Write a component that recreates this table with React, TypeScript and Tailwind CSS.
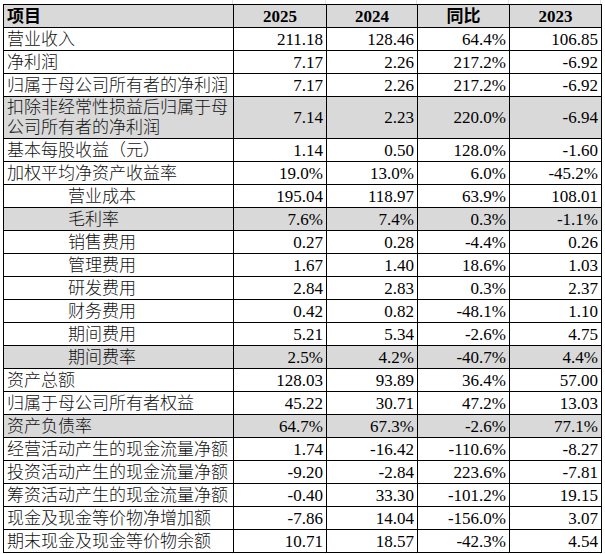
type Row = {
  name: string;
  vals: [string, string, string, string];
  shade?: boolean;
  indent?: boolean;
  tall?: boolean;
};

const rows: Row[] = [
  { name: "营业收入", vals: ["211.18", "128.46", "64.4%", "106.85"] },
  { name: "净利润", vals: ["7.17", "2.26", "217.2%", "-6.92"] },
  { name: "归属于母公司所有者的净利润", vals: ["7.17", "2.26", "217.2%", "-6.92"] },
  { name: "扣除非经常性损益后归属于母公司所有者的净利润", vals: ["7.14", "2.23", "220.0%", "-6.94"], shade: true, tall: true },
  { name: "基本每股收益（元）", vals: ["1.14", "0.50", "128.0%", "-1.60"] },
  { name: "加权平均净资产收益率", vals: ["19.0%", "13.0%", "6.0%", "-45.2%"] },
  { name: "营业成本", vals: ["195.04", "118.97", "63.9%", "108.01"], indent: true },
  { name: "毛利率", vals: ["7.6%", "7.4%", "0.3%", "-1.1%"], indent: true, shade: true },
  { name: "销售费用", vals: ["0.27", "0.28", "-4.4%", "0.26"], indent: true },
  { name: "管理费用", vals: ["1.67", "1.40", "18.6%", "1.03"], indent: true },
  { name: "研发费用", vals: ["2.84", "2.83", "0.3%", "2.37"], indent: true },
  { name: "财务费用", vals: ["0.42", "0.82", "-48.1%", "1.10"], indent: true },
  { name: "期间费用", vals: ["5.21", "5.34", "-2.6%", "4.75"], indent: true },
  { name: "期间费率", vals: ["2.5%", "4.2%", "-40.7%", "4.4%"], indent: true, shade: true },
  { name: "资产总额", vals: ["128.03", "93.89", "36.4%", "57.00"] },
  { name: "归属于母公司所有者权益", vals: ["45.22", "30.71", "47.2%", "13.03"] },
  { name: "资产负债率", vals: ["64.7%", "67.3%", "-2.6%", "77.1%"], shade: true },
  { name: "经营活动产生的现金流量净额", vals: ["1.74", "-16.42", "-110.6%", "-8.27"] },
  { name: "投资活动产生的现金流量净额", vals: ["-9.20", "-2.84", "223.6%", "-7.81"] },
  { name: "筹资活动产生的现金流量净额", vals: ["-0.40", "33.30", "-101.2%", "19.15"] },
  { name: "现金及现金等价物净增加额", vals: ["-7.86", "14.04", "-156.0%", "3.07"] },
  { name: "期末现金及现金等价物余额", vals: ["10.71", "18.57", "-42.3%", "4.54"] },
];

// faint spreadsheet gridlines around the table
function GridStrip({ h }: { h: string }) {
  return (
    <div className={`flex ${h}`}>
      <div className="w-[233px] border-r border-[#e4e4e4]" />
      <div className="w-[93px] border-r border-[#e4e4e4]" />
      <div className="w-[91px] border-r border-[#e4e4e4]" />
      <div className="w-[92px] border-r border-[#e4e4e4]" />
      <div className="w-[92px] border-r border-[#e4e4e4]" />
    </div>
  );
}

export default function App() {
  return (
    <div
      className="w-[605px] h-[554px] bg-white text-black overflow-hidden text-[17px]"
      style={{ fontFamily: '"Liberation Serif", "Noto Sans CJK SC", serif' }}
    >
      <GridStrip h="h-[4px]" />
      <table className="ml-[3px] table-fixed border-collapse">
        <colgroup>
          <col className="w-[230px]" />
          <col className="w-[93px]" />
          <col className="w-[91px]" />
          <col className="w-[92px]" />
          <col className="w-[92px]" />
        </colgroup>
        <thead>
          <tr className="h-[23px] bg-[#d9d9d9] font-bold">
            <td className="border border-black px-[3px] leading-none text-left">项目</td>
            <td className="border border-black leading-none text-center">2025</td>
            <td className="border border-black leading-none text-center">2024</td>
            <td className="border border-black leading-none text-center">同比</td>
            <td className="border border-black leading-none text-center">2023</td>
          </tr>
        </thead>
        <tbody>
          {rows.map((r) => (
            <tr
              key={r.name}
              className={`${r.tall ? "h-[41px]" : "h-[23px]"} ${r.shade ? "bg-[#d9d9d9]" : ""}`}
            >
              <td
                className={`border border-black pr-[2px] pt-[1px] leading-[20px] font-light text-[#111] ${r.indent ? "pl-[64px]" : "pl-[3px]"}`}
              >
                {r.name}
              </td>
              {r.vals.map((v, i) => (
                <td key={i} className="border border-black pr-[3px] leading-none text-right">
                  {v}
                </td>
              ))}
            </tr>
          ))}
        </tbody>
      </table>
      <GridStrip h="h-[4px]" />
    </div>
  );
}
